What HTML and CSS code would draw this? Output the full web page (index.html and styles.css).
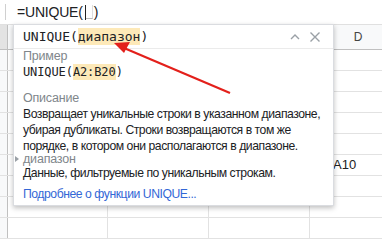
FILE: index.html
```html
<!DOCTYPE html>
<html lang="ru">
<head>
  <meta charset="UTF-8">
  <title>UNIQUE</title>
  <link rel="stylesheet" href="styles.css">
</head>
<body>
  <div class="screen">
    <div class="formula-bar">
      <span class="fx-sep"></span>
      <span class="formula">=UNIQUE(<span class="cursor"></span><span class="slot"></span>)</span>
    </div>

    <div class="grid">
      <div class="row head">
        <div class="rh"></div><div class="c"></div><div class="c"></div><div class="c"></div><div class="c col-d">D</div>
      </div>
      <div class="row"><div class="rh"></div><div class="c"></div><div class="c"></div><div class="c"></div><div class="c"></div></div>
      <div class="row"><div class="rh"></div><div class="c"></div><div class="c"></div><div class="c"></div><div class="c"></div></div>
      <div class="row"><div class="rh"></div><div class="c"></div><div class="c"></div><div class="c"></div><div class="c"></div></div>
      <div class="row"><div class="rh"></div><div class="c"></div><div class="c"></div><div class="c"></div><div class="c"></div></div>
      <div class="row"><div class="rh"></div><div class="c"></div><div class="c"></div><div class="c"></div><div class="c"></div></div>
      <div class="row"><div class="rh"></div><div class="c"></div><div class="c"></div><div class="c"></div><div class="c val">A10</div></div>
      <div class="row"><div class="rh"></div><div class="c"></div><div class="c"></div><div class="c"></div><div class="c"></div></div>
      <div class="row"><div class="rh"></div><div class="c"></div><div class="c"></div><div class="c"></div><div class="c"></div></div>
      <div class="row"><div class="rh"></div><div class="c"></div><div class="c"></div><div class="c"></div><div class="c"></div></div>
    </div>

    <!-- Подсказка по функции -->
    <div class="help">
      <div class="help-title">
        <span class="mono">UNIQUE(<mark>диапазон</mark>)</span>
        <span class="help-btns">
          <svg width="10" height="8" viewBox="0 0 10 8"><path d="M1 6 L5 2 L9 6" fill="none" stroke="#9aa0a6" stroke-width="1.4"/></svg>
          <svg width="12" height="12" viewBox="0 0 12 12"><path d="M1.5 1.5 L10.5 10.5 M10.5 1.5 L1.5 10.5" fill="none" stroke="#9aa0a6" stroke-width="1.4"/></svg>
        </span>
      </div>
      <div class="help-body">
        <div class="label">Пример</div>
        <div class="mono small">UNIQUE(<mark>A2:B20</mark>)</div>

        <div class="label gap">Описание</div>
        <div class="text">Возвращает уникальные строки в указанном диапазоне, убирая дубликаты. Строки возвращаются в том же порядке, в котором они располагаются в диапазоне.</div>

        <div class="label arg">диапазон</div>
        <div class="text">Данные, фильтруемые по уникальным строкам.</div>

        <a class="more" href="#">Подробнее о функции UNIQUE...</a>
      </div>
    </div>

    <svg class="arrow" width="382" height="249" viewBox="0 0 382 249">
      <line x1="230" y1="93" x2="124" y2="48" stroke="#e3201b" stroke-width="2.2"/>
      <path d="M114 43 L130 42 L124 53 Z" fill="#e3201b"/>
    </svg>
  </div>
</body>
</html>
```

FILE: styles.css
```css
/* Общие */
body {
  margin: 0;
  background: #fff;
  font-family: 'Liberation Sans', Arial, sans-serif;
  color: #202124;
}

.screen {
  position: relative;
  width: 382px;
  height: 249px;
  overflow: hidden;
}

/* Строка формул */
.formula-bar {
  height: 24px;
  display: flex;
  align-items: center;
  border-bottom: 1px solid #e0e0e0;
}

.fx-sep {
  width: 1px;
  height: 16px;
  margin-left: 5px;
  background: #d0d0d0;
}

.formula {
  margin-left: 11px;
  font-size: 14px;
  letter-spacing: -0.2px;
  display: flex;
  align-items: center;
}

.cursor {
  width: 1px;
  height: 15px;
  background: #222;
  margin-left: 2px;
}

.slot {
  width: 6px;
  height: 13px;
  border-bottom: 1px solid #bbb;
  border-right: 1px solid #ddd;
  margin-right: 1px;
}

/* Таблица */
.row {
  display: flex;
  height: 20px;
  border-bottom: 1px solid #e2e2e2;
}

.row.head {
  height: 24px;
  background: #f8f9fa;
  border-bottom-color: #c0c0c0;
}

.rh {
  width: 7px;
  flex: none;
  background: #f8f9fa;
  border-right: 1px solid #c0c0c0;
}

.row.head .rh {
  background: #e3e3e3;
}

.c {
  width: 101px;
  flex: none;
  box-sizing: border-box;
  border-right: 1px solid #e2e2e2;
  padding-left: 3px;
  font-size: 13px;
  line-height: 20px;
}

.row .c:nth-child(2) {
  width: 100px;
}

.col-d {
  text-align: center;
  padding: 0 4px 0 0;
  color: #444;
  font-size: 12px;
  line-height: 24px;
}

/* видимый хвост значения, начало закрыто подсказкой */
.val {
  color: #222;
  padding-left: 23px;
}

/* Подсказка */
.help {
  position: absolute;
  left: 13px;
  top: 24px;
  width: 321px;
  height: 182px;
  box-sizing: border-box;
  background: #fff;
  border: 1px solid #dadce0;
  box-shadow: 0 2px 5px rgba(0, 0, 0, 0.25);
}

.help-title {
  height: 23px;
  display: flex;
  align-items: center;
  justify-content: space-between;
  padding: 0 12px 0 9px;
  border-bottom: 1px solid #ebebeb;
}

.help-btns {
  display: flex;
  align-items: center;
  gap: 9px;
}

.mono {
  font-family: 'DejaVu Sans Mono', 'Liberation Mono', monospace;
  font-size: 13px;
}

.mono.small {
  font-size: 12px;
  letter-spacing: -0.1px;
  line-height: 16px;
}

mark {
  background: #fde9b8;
  color: inherit;
  padding: 1px 0;
}

.help-body {
  padding: 0 3px 0 9px;
}

.label {
  font-size: 12.5px;
  letter-spacing: -0.2px;
  color: #80868b;
  line-height: 15px;
}

.label.gap {
  margin-top: 11px;
}

.label.arg {
  position: relative;
  line-height: 11px;
}

.label.arg::before {
  content: '';
  position: absolute;
  left: -8px;
  top: 2px;
  border-left: 4px solid #9aa0a6;
  border-top: 3.5px solid transparent;
  border-bottom: 3.5px solid transparent;
}

.text {
  font-size: 12.2px;
  letter-spacing: -0.45px;
  line-height: 16px;
  color: #202124;
}

.more {
  display: block;
  margin-top: 5px;
  font-size: 12.2px;
  letter-spacing: -0.45px;
  line-height: 16px;
  color: #3367d6;
  text-decoration: none;
}

.arrow {
  position: absolute;
  left: 0;
  top: 0;
}
```
